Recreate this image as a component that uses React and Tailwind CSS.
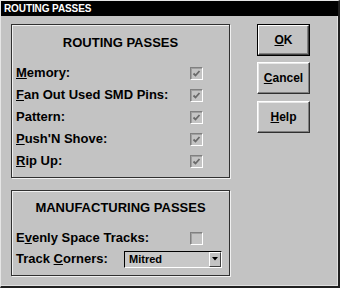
import React from "react";

const font = { fontFamily: '"Liberation Sans", Arial, sans-serif' };

function Check({ checked }) {
  return (
    <div className="w-[13px] h-[13px] shrink-0 bg-[#c4c4c4] border border-t-[#808080] border-l-[#808080] border-r-white border-b-white shadow-[inset_1px_1px_0_#a0a0a0]">
      {checked && (
        <svg width="11" height="11" viewBox="0 0 11 11" className="block">
          <polyline points="2.5,5.5 4.5,7.5 8.5,3" fill="none" stroke="#6a6a6a" strokeWidth="1.8" />
        </svg>
      )}
    </div>
  );
}

function Row({ children, checked }) {
  return (
    <div className="flex items-center h-[22px]">
      <div className="w-[174px] text-[13px] leading-[16px] font-bold text-black">{children}</div>
      <Check checked={checked} />
    </div>
  );
}

function Btn({ children, def }) {
  if (def) {
    return (
      <div className="w-[53px] h-[32px] border border-black p-0">
        <div className="w-full h-full border border-t-white border-l-white border-r-[#404040] border-b-[#404040] shadow-[inset_-1px_-1px_0_#808080] flex items-center justify-center text-[12px] font-bold text-black">
          {children}
        </div>
      </div>
    );
  }
  return (
    <div className="w-[53px] h-[32px] border border-t-white border-l-white border-r-[#303030] border-b-[#303030] shadow-[inset_-1px_-1px_0_#808080,inset_1px_1px_0_#e8e8e8] flex items-center justify-center text-[12px] font-bold text-black">
      {children}
    </div>
  );
}

export default function App() {
  return (
    <div
      style={font}
      className="w-[340px] h-[288px] bg-[#c3c3c3] border-l border-t border-l-[#e6e6e6] border-t-[#e6e6e6] border-r-2 border-b-2 border-r-[#202020] border-b-[#202020] shadow-[inset_-1px_-1px_0_#e0e0e0] flex flex-col overflow-hidden"
    >
      <div className="h-[15px] bg-black flex items-center pl-[3px]">
        <span className="text-white text-[10px] font-bold leading-[12px] tracking-[-0.1px]">ROUTING PASSES</span>
      </div>
      <div className="flex pl-[10px] pt-[8px]">
        <div className="w-[219px] flex flex-col gap-[12px]">
          <div className="border border-[#303030] shadow-[inset_1px_1px_0_#f0f0f0,1px_1px_0_#f0f0f0] pt-[10px] pb-[5px] pl-[4px]">
            <div className="text-center text-[13px] leading-[16px] font-bold text-black pr-[4px]">ROUTING PASSES</div>
            <div className="mt-[11px]">
              <Row checked><u>M</u>emory:</Row>
              <Row checked><u>F</u>an Out Used SMD Pins:</Row>
              <Row checked>Pattern:</Row>
              <Row checked><u>P</u>ush'N Shove:</Row>
              <Row checked><u>R</u>ip Up:</Row>
            </div>
          </div>
          <div className="border border-[#303030] shadow-[inset_1px_1px_0_#f0f0f0,1px_1px_0_#f0f0f0] pt-[9px] pb-[6px] pl-[4px]">
            <div className="text-center text-[13px] leading-[16px] font-bold text-black pr-[4px]">MANUFACTURING PASSES</div>
            <div className="mt-[11px]">
              <Row>E<u>v</u>enly Space Tracks:</Row>
              <div className="flex items-center h-[20px]">
                <div className="w-[108px] text-[13px] leading-[16px] font-bold text-black">Track <u>C</u>orners:</div>
                <div className="w-[98px] h-[17px] border border-t-black border-l-black border-r-white border-b-white bg-[#c8c8c8] flex items-center">
                  <span className="flex-1 pl-[4px] text-[11px] font-bold leading-[14px] text-black">Mitred</span>
                  <div className="w-[12px] h-[15px] border border-t-white border-l-white border-r-[#404040] border-b-[#404040] bg-[#c3c3c3] flex items-center justify-center">
                    <svg width="6" height="4" viewBox="0 0 6 4"><polygon points="0,0 6,0 3,3.5" fill="#000" /></svg>
                  </div>
                </div>
              </div>
            </div>
          </div>
        </div>
        <div className="ml-[27px] w-[53px] flex flex-col">
          <Btn def><u>O</u>K</Btn>
          <div className="mt-[6px]"><Btn><u>C</u>ancel</Btn></div>
          <div className="mt-[7px]"><Btn><u>H</u>elp</Btn></div>
        </div>
      </div>
    </div>
  );
}
